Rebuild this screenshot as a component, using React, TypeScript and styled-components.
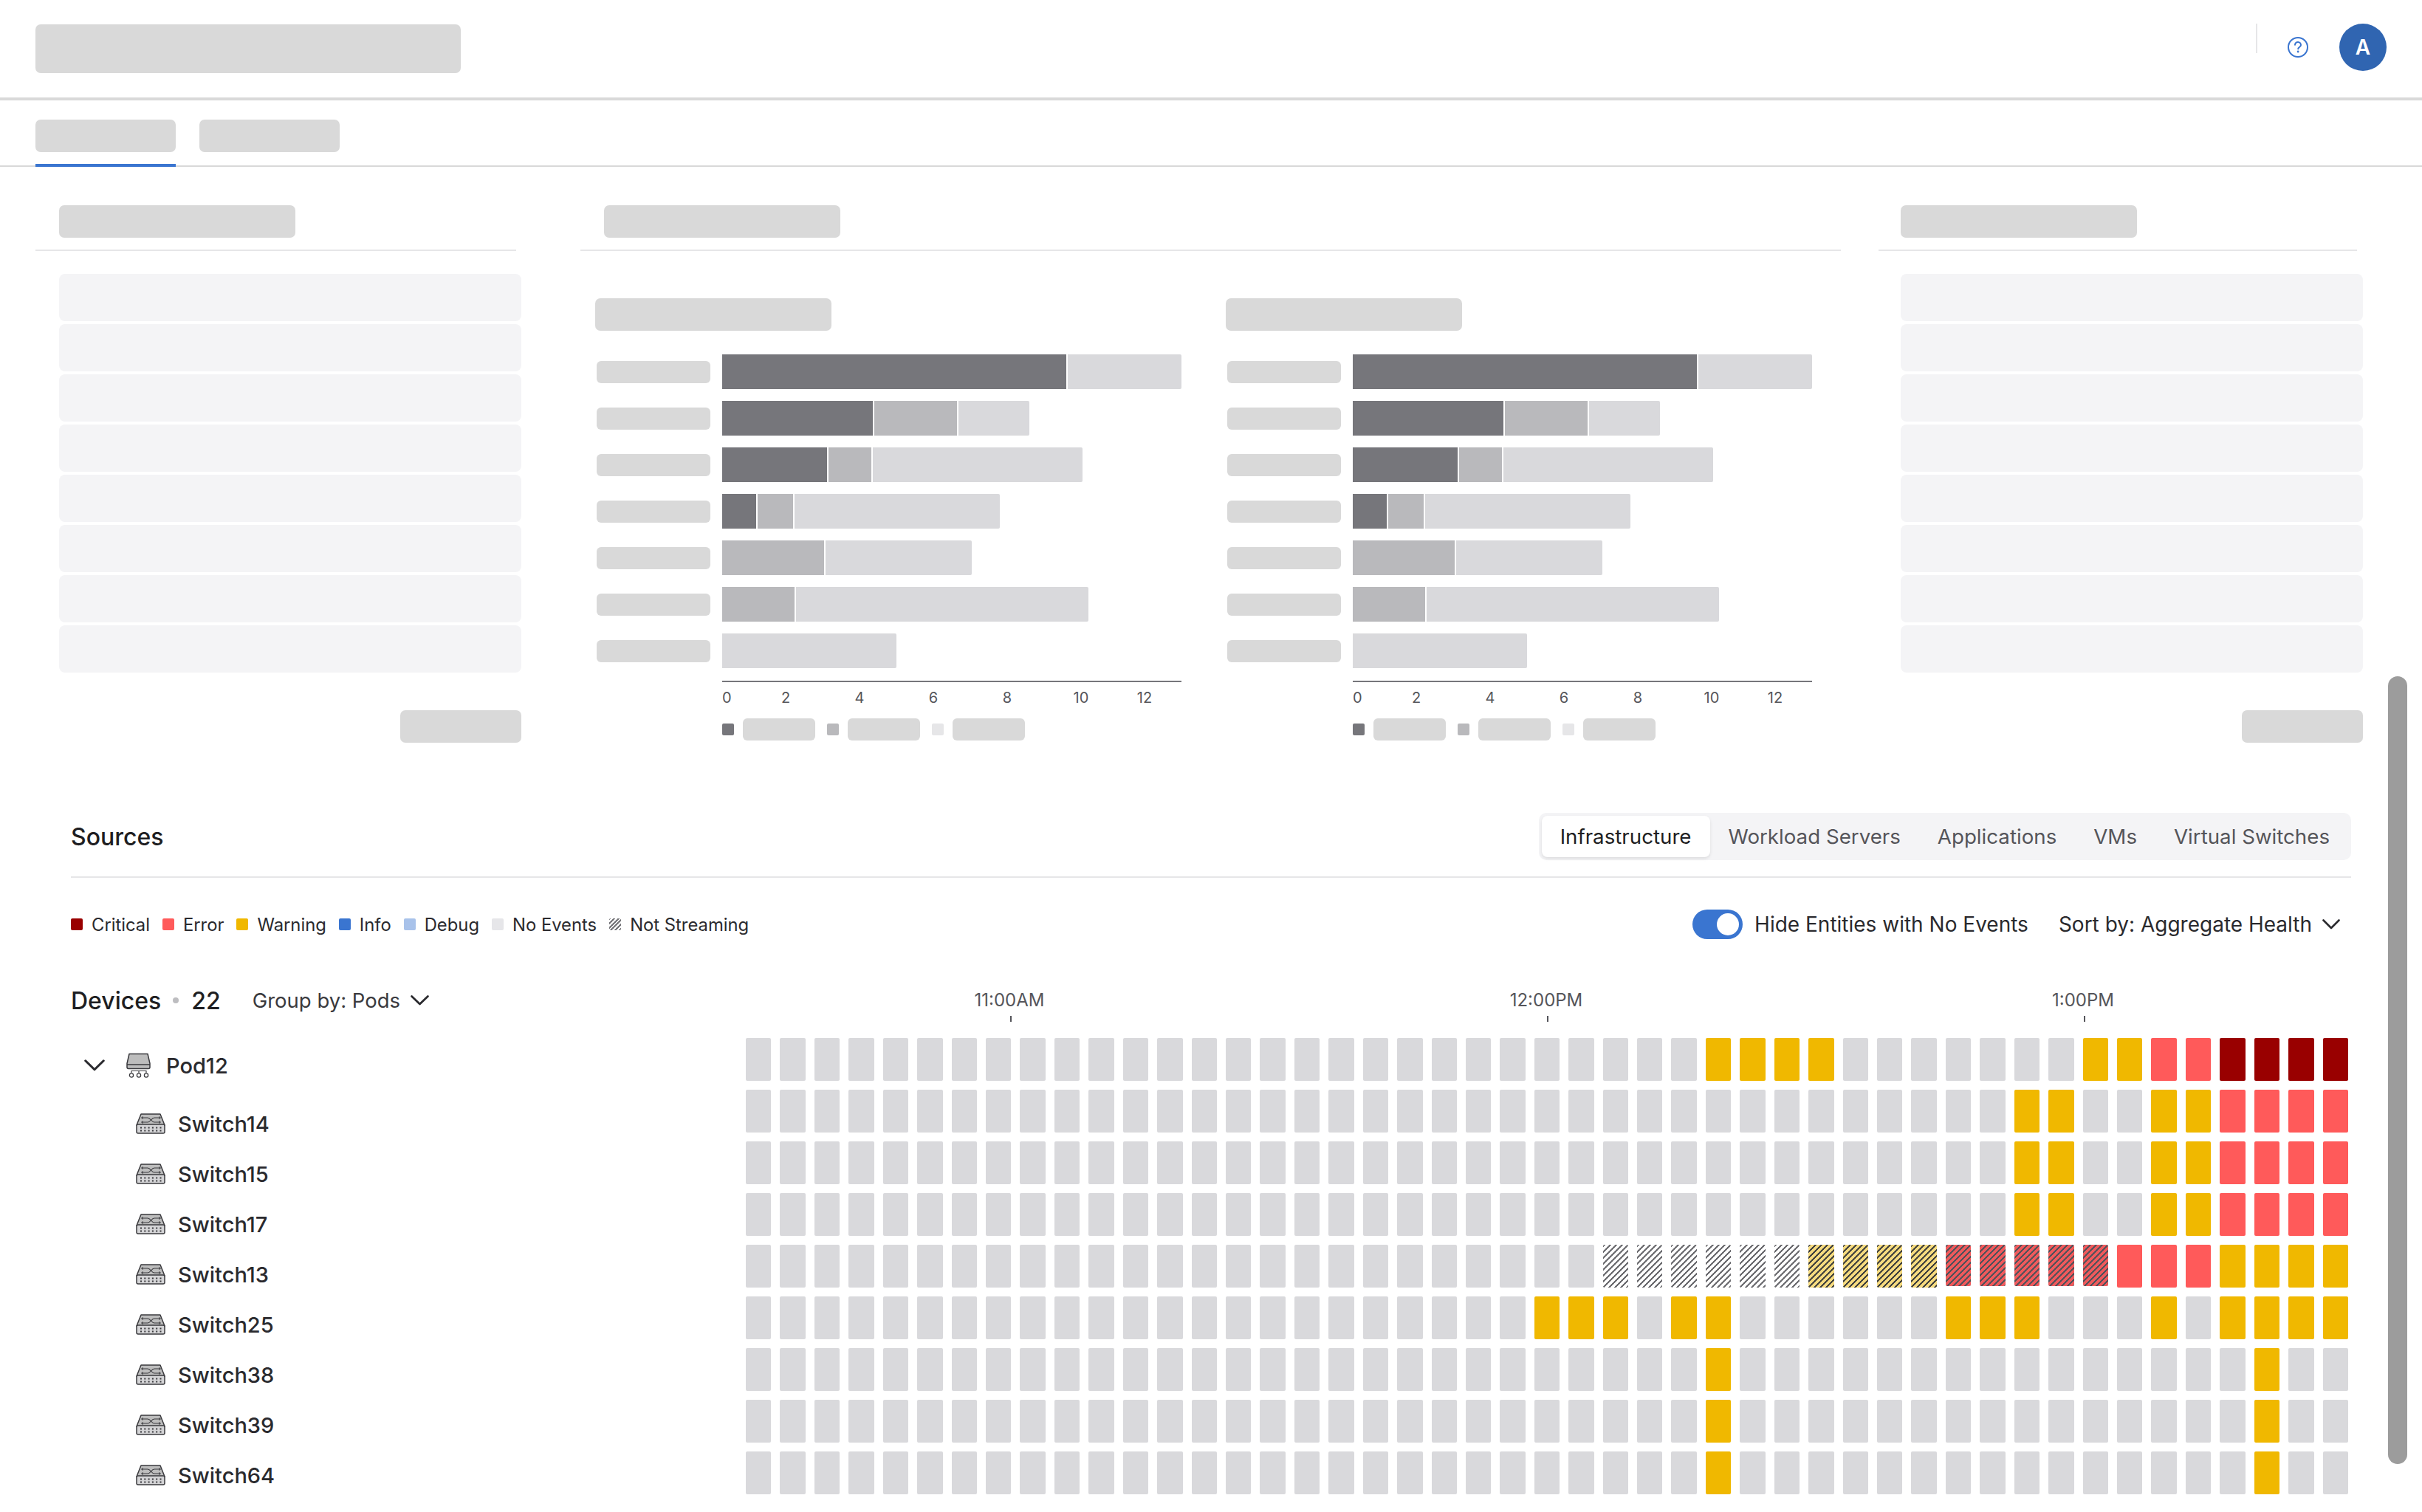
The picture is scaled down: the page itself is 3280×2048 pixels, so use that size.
import React from 'react';
import styled, { createGlobalStyle } from 'styled-components';

const GlobalStyle = createGlobalStyle`
    html, body { margin: 0; padding: 0; background: #fff; }
    body { font-family: Inter, "Liberation Sans", sans-serif; color: #2a2a2e; }
    * { box-sizing: border-box; }
`;

const Page = styled.div`
    position: relative;
    width: 3280px;
    height: 2048px;
    overflow: hidden;
    background: #fff;
`;

const Skeleton = styled.div<{ $w: number; $h: number; $r?: number }>`
    width: ${p => p.$w}px;
    height: ${p => p.$h}px;
    border-radius: ${p => p.$r ?? 7}px;
    background: #d9d9d9;
    flex: none;
`;

/* top bar */
const Header = styled.header`
    display: flex;
    justify-content: space-between;
    height: 136px;
    padding: 33px 48px 0;
    border-bottom: 4px solid #d9d9d9;
`;
const HeaderRight = styled.div`
    display: flex;
    align-items: center;
    height: 64px;
    margin-top: -1px;
`;
const HeaderRule = styled.div`
    width: 2px;
    height: 40px;
    background: #e6e6e8;
    align-self: flex-start;
`;
const HelpIcon = styled.svg`
    width: 30px;
    height: 30px;
    margin: 0 41px 0 40px;
`;
const Avatar = styled.div`
    width: 64px;
    height: 64px;
    border-radius: 50%;
    background: #3065b1;
    color: #fff;
    font-size: 28px;
    font-weight: 600;
    display: flex;
    align-items: center;
    justify-content: center;
`;

/* page tabs */
const TabBar = styled.nav`
    display: flex;
    gap: 32px;
    height: 90px;
    padding: 0 48px;
    border-bottom: 2px solid #d9d9d9;
`;
const PageTab = styled.div<{ $active?: boolean }>`
    height: 90px;
    padding-top: 26px;
    border-bottom: 4px solid ${p => (p.$active ? '#3a75d0' : 'transparent')};
`;

/* panels */
const Panels = styled.section`
    display: flex;
    align-items: flex-start;
    padding: 52px 0 0 48px;
    height: 876px;
`;
const SidePanel = styled.div<{ $w: number; $gap: number }>`
    width: ${p => p.$w}px;
    margin-right: ${p => p.$gap}px;
    flex: none;
    display: flex;
    flex-direction: column;
`;
const PanelHead = styled.div<{ $rule: number; $pad: number }>`
    width: ${p => p.$rule}px;
    padding: 0 0 16px ${p => p.$pad}px;
    border-bottom: 2px solid #e6e6e8;
`;
const SkeletonList = styled.div<{ $pad: number }>`
    display: flex;
    flex-direction: column;
    gap: 4px;
    margin-top: 31px;
    padding-left: ${p => p.$pad}px;
`;
const SkeletonRow = styled.div`
    height: 64px;
    border-radius: 8px;
    background: #f4f4f6;
`;
const PanelAction = styled.div`
    align-self: flex-end;
    margin-top: 51px;
`;
const CenterPanel = styled.div`
    width: 1707px;
    margin-right: 51px;
    flex: none;
`;
const Charts = styled.div`
    display: flex;
    gap: 60px;
    padding: 64px 0 0 20px;
`;
const Chart = styled.div`
    width: 794px;
`;
const BarRows = styled.div`
    display: flex;
    flex-direction: column;
    gap: 16px;
    margin-top: 32px;
`;
const BarRow = styled.div`
    display: flex;
    align-items: center;
    padding-left: 2px;
`;
const BarTrack = styled.div`
    display: flex;
    gap: 2px;
    margin-left: 16px;
    height: 47px;
`;
const Seg = styled.div<{ $tone: number }>`
    height: 100%;
    background: ${p => ['#76767b', '#b9b9bc', '#d9d9dc'][p.$tone]};
    &:last-child { border-radius: 0 2px 2px 0; }
`;
const AxisLine = styled.div`
    width: 622px;
    height: 2px;
    margin: 17px 0 0 172px;
    background: #76767b;
`;
const Ticks = styled.div`
    display: flex;
    margin: 9px 0 0 172px;
    font-size: 20px;
    line-height: 24px;
    color: #55555a;
`;
const Tick = styled.span<{ $w: number; $left?: boolean }>`
    width: ${p => p.$w}px;
    text-align: ${p => (p.$left ? 'left' : 'center')};
`;
const ChartLegend = styled.div`
    display: flex;
    align-items: center;
    margin: 16px 0 0 172px;
`;
const LegendSwatch = styled.span<{ $c: string }>`
    width: 16px;
    height: 16px;
    border-radius: 2px;
    margin-right: 12px;
    background: ${p => p.$c};
    flex: none;
`;
const ChartLegendItem = styled.div`
    display: flex;
    align-items: center;
    margin-right: 16px;
`;

/* sources */
const Sources = styled.section`
    padding: 0 96px;
`;
const SourcesHead = styled.div`
    display: flex;
    align-items: center;
    justify-content: space-between;
    height: 87px;
    padding-bottom: 23px;
    border-bottom: 2px solid #e6e6e8;
`;
const SectionTitle = styled.h2`
    margin: 0;
    font-size: 32px;
    font-weight: 500;
    color: #1e1e22;
`;
const Segmented = styled.div`
    display: flex;
    padding: 4px;
    height: 64px;
    border-radius: 10px;
    background: #f4f4f6;
`;
const SegItem = styled.div<{ $active?: boolean }>`
    display: flex;
    align-items: center;
    padding: 0 25px;
    font-size: 27.7px;
    border-radius: 8px;
    color: ${p => (p.$active ? '#1e1e22' : '#55555a')};
    background: ${p => (p.$active ? '#fff' : 'transparent')};
    box-shadow: ${p => (p.$active ? '0 2px 4px rgba(0,0,0,.1)' : 'none')};
`;
const FilterRow = styled.div`
    display: flex;
    align-items: center;
    justify-content: space-between;
    height: 40px;
    margin-top: 43px;
    padding-right: 15px;
`;
const Legend = styled.div`
    display: flex;
    align-items: center;
    gap: 17px;
    font-size: 23.8px;
    color: #2a2a2e;
`;
const LegendItem = styled.div`
    display: flex;
    align-items: center;
`;
const StreamSwatch = styled(LegendSwatch)`
    background: repeating-linear-gradient(135deg, #77777b 0 2px, #fff 2px 4px);
`;
const Controls = styled.div`
    display: flex;
    align-items: center;
    font-size: 28px;
    color: #2a2a2e;
`;
const Toggle = styled.div`
    position: relative;
    width: 68px;
    height: 40px;
    border-radius: 20px;
    background: #3a75d0;
    margin-right: 16px;
`;
const Knob = styled.span`
    position: absolute;
    right: 5px;
    top: 5px;
    width: 30px;
    height: 30px;
    border-radius: 50%;
    background: #fff;
`;
const SortLabel = styled.span`
    margin-left: 41px;
`;
const Chevron = styled.svg<{ $w: number }>`
    width: ${p => p.$w}px;
    height: ${p => Math.round(p.$w * 0.58)}px;
    flex: none;
`;
const SortChevron = styled(Chevron)`
    margin-left: 14px;
`;

const Body = styled.div`
    display: flex;
    margin-top: 60px;
`;
const TreeColumn = styled.div`
    width: 914px;
    flex: none;
`;
const DevicesRow = styled.div`
    display: flex;
    align-items: center;
    height: 50px;
    margin-top: -2px;
`;
const DevicesTitle = styled.span`
    font-size: 32px;
    font-weight: 500;
    color: #1e1e22;
`;
const Dot = styled.span`
    width: 8px;
    height: 8px;
    border-radius: 50%;
    background: #bdbdc0;
    margin: 0 17px 0 16px;
`;
const GroupBy = styled.span`
    margin-left: 43px;
    margin-right: 14px;
    font-size: 27.5px;
    color: #3a3a3e;
`;
const PodRow = styled.div`
    display: flex;
    align-items: center;
    height: 68px;
    margin-top: 29px;
    padding-left: 18px;
    font-size: 29px;
    font-weight: 500;
`;
const PodIconBox = styled.svg`
    width: 33px;
    height: 34px;
    margin: 0 21px 0 29px;
`;
const SwitchList = styled.div`
    margin-top: 11px;
`;
const SwitchRow = styled.div`
    display: flex;
    align-items: center;
    height: 68px;
    padding-left: 88px;
    font-size: 29px;
    font-weight: 500;
`;
const SwitchIconBox = styled.svg`
    width: 40px;
    height: 28px;
    margin-right: 17px;
`;

const HeatColumn = styled.div`
    width: 2170px;
    flex: none;
`;
const TimeAxis = styled.div`
    display: flex;
    height: 74px;
    margin-left: -4.5px;
    padding-top: 8px;
`;
const TimeMark = styled.div`
    width: 727px;
    flex: none;
    display: flex;
    flex-direction: column;
    align-items: center;
    font-size: 24px;
    line-height: 30px;
    color: #55555a;
`;
const TimeLabel = styled.span`
    padding-right: 4px;
`;
const TimeTick = styled.span`
    width: 2px;
    height: 8px;
    margin-top: 6px;
    background: #55555a;
`;
const Heat = styled.div`
    display: grid;
    grid-template-columns: repeat(47, 1fr);
    grid-auto-rows: 58px;
    gap: 12px;
`;

const hatch = (bg: string, fg: string) =>
    `repeating-linear-gradient(135deg, ${fg} 0 2.3px, ${bg} 2.3px 5.66px)`;

const cellFill: Record<string, string> = {
    '.': '#d9d9dc',
    y: '#f0b800',
    e: '#ff5a5a',
    c: '#990000',
    h: hatch('#fff', '#6e6e72'),
    w: hatch('#f7db7f', '#45453f'),
    r: hatch('#f05a5c', '#55525a'),
};

const Cell = styled.div<{ $k: string }>`
    border-radius: 2px;
    background: ${p => cellFill[p.$k]};
    ${p => (p.$k === 'r' ? 'height: 56px;' : '')}
`;

const Thumb = styled.div`
    position: absolute;
    left: 3234px;
    top: 916px;
    width: 26px;
    height: 1067px;
    border-radius: 13px;
    background: #9c9c9c;
`;

const dots = (n: number) => '.'.repeat(n);
const upper = dots(37) + 'yy..yyeeee';
const lower = dots(28) + 'y' + dots(15) + 'y..';
const heatRows = [
    dots(28) + 'yyyy' + dots(7) + 'yyeecccc',
    upper,
    upper,
    upper,
    dots(25) + 'hhhhhhwwwwrrrrreeeyyyy',
    dots(23) + 'yyy.yy' + dots(6) + 'yyy...y.yyyy',
    lower,
    lower,
    lower,
];

const barData: { tone: number; w: number }[][] = [
    [{ tone: 0, w: 466 }, { tone: 2, w: 154 }],
    [{ tone: 0, w: 204 }, { tone: 1, w: 112 }, { tone: 2, w: 96 }],
    [{ tone: 0, w: 142 }, { tone: 1, w: 58 }, { tone: 2, w: 284 }],
    [{ tone: 0, w: 46 }, { tone: 1, w: 48 }, { tone: 2, w: 278 }],
    [{ tone: 1, w: 138 }, { tone: 2, w: 198 }],
    [{ tone: 1, w: 98 }, { tone: 2, w: 396 }],
    [{ tone: 2, w: 236 }],
];

const ChevronDown = ({ w = 24, as: Comp = Chevron }: { w?: number; as?: typeof Chevron }) => (
    <Comp $w={w} viewBox="0 0 24 14" preserveAspectRatio="none" fill="none">
        <path d="M1.5 1.5 12 12 22.5 1.5" stroke="#2a2a2e" strokeWidth="2.6" strokeLinecap="round" strokeLinejoin="round" />
    </Comp>
);

const PodIcon = () => (
    <PodIconBox viewBox="0 0 33 34" fill="none">
        <path d="M4 1.5h25l3 13v5a2 2 0 0 1-2 2H3a2 2 0 0 1-2-2v-5z" fill="#bdbdbd" stroke="#3a3a3e" strokeWidth="1.5" strokeLinejoin="round" />
        <path d="M1 16h31" stroke="#3a3a3e" strokeWidth="1.5" />
        <path d="M7 27v-2.5h20V27M17 24.5V27" stroke="#3a3a3e" strokeWidth="1.2" />
        <circle cx="7" cy="30.5" r="2.6" fill="#fff" stroke="#3a3a3e" strokeWidth="1.3" />
        <circle cx="17" cy="30.5" r="2.6" fill="#fff" stroke="#3a3a3e" strokeWidth="1.3" />
        <circle cx="27" cy="30.5" r="2.6" fill="#fff" stroke="#3a3a3e" strokeWidth="1.3" />
    </PodIconBox>
);

const SwitchIcon = () => (
    <SwitchIconBox viewBox="0 0 40 28" fill="none">
        <path d="M7 1h26l6 15H1z" fill="#bdbdbd" stroke="#3a3a3e" strokeWidth="1.5" strokeLinejoin="round" />
        <rect x="1" y="15" width="38" height="12" rx="2" fill="#d4d4d6" stroke="#3a3a3e" strokeWidth="1.5" />
        <path d="M8 6h8c4 0 5 6 9 6h8M8 12h8c4 0 5-6 9-6h8" stroke="#3a3a3e" strokeWidth="1.1" />
        <path d="M10 4.5 7.5 6 10 7.5M10 10.5 7.5 12 10 13.5M31 4.5 33.5 6 31 7.5M31 10.5 33.5 12 31 13.5" stroke="#3a3a3e" strokeWidth="1" />
        {[6, 11.3, 16.6, 21.9, 27.2, 32.5].map(x => (
            <React.Fragment key={x}>
                <rect x={x} y="18.5" width="2" height="2" fill="#3a3a3e" />
                <rect x={x} y="22.5" width="2" height="2" fill="#3a3a3e" />
            </React.Fragment>
        ))}
    </SwitchIconBox>
);

const BarChart = () => (
    <Chart>
        <Skeleton $w={320} $h={44} />
        <BarRows>
            {barData.map((segs, i) => (
                <BarRow key={i}>
                    <Skeleton $w={154} $h={30} $r={6} />
                    <BarTrack>
                        {segs.map((s, j) => (
                            <Seg key={j} $tone={s.tone} style={{ width: s.w }} />
                        ))}
                    </BarTrack>
                </BarRow>
            ))}
        </BarRows>
        <AxisLine />
        <Ticks>
            <Tick $w={36} $left>0</Tick>
            <Tick $w={100}>2</Tick>
            <Tick $w={100}>4</Tick>
            <Tick $w={100}>6</Tick>
            <Tick $w={100}>8</Tick>
            <Tick $w={100}>10</Tick>
            <Tick $w={72}>12</Tick>
        </Ticks>
        <ChartLegend>
            <ChartLegendItem>
                <LegendSwatch $c="#76767b" />
                <Skeleton $w={98} $h={30} $r={6} />
            </ChartLegendItem>
            <ChartLegendItem>
                <LegendSwatch $c="#b9b9bc" />
                <Skeleton $w={98} $h={30} $r={6} />
            </ChartLegendItem>
            <ChartLegendItem>
                <LegendSwatch $c="#e6e6e8" />
                <Skeleton $w={98} $h={30} $r={6} />
            </ChartLegendItem>
        </ChartLegend>
    </Chart>
);

const legendItems = [
    ['Critical', '#990000'],
    ['Error', '#ff5a5a'],
    ['Warning', '#f0b800'],
    ['Info', '#3a75d0'],
    ['Debug', '#a8c2ea'],
    ['No Events', '#e6e6e9'],
];

const switches = ['Switch14', 'Switch15', 'Switch17', 'Switch13', 'Switch25', 'Switch38', 'Switch39', 'Switch64'];

const App = () => (
    <Page>
        <GlobalStyle />
        <Header>
            <Skeleton $w={576} $h={66} />
            <HeaderRight>
                <HeaderRule />
                <HelpIcon viewBox="0 0 30 30" fill="none">
                    <circle cx="15" cy="15" r="13" stroke="#3a75d0" strokeWidth="2" />
                    <path d="M11 11.8a4 4 0 0 1 8 .2c0 2.5-3.6 2.8-3.8 5.2" stroke="#3a75d0" strokeWidth="2" strokeLinecap="round" />
                    <circle cx="15.1" cy="21" r="1.4" fill="#3a75d0" />
                </HelpIcon>
                <Avatar>A</Avatar>
            </HeaderRight>
        </Header>
        <TabBar>
            <PageTab $active><Skeleton $w={190} $h={44} /></PageTab>
            <PageTab><Skeleton $w={190} $h={44} /></PageTab>
        </TabBar>
        <Panels>
            <SidePanel $w={658} $gap={80}>
                <PanelHead $rule={651} $pad={32}><Skeleton $w={320} $h={44} /></PanelHead>
                <SkeletonList $pad={32}>
                    {Array.from({ length: 8 }, (_, i) => <SkeletonRow key={i} />)}
                </SkeletonList>
                <PanelAction><Skeleton $w={164} $h={44} /></PanelAction>
            </SidePanel>
            <CenterPanel>
                <PanelHead $rule={1707} $pad={32}><Skeleton $w={320} $h={44} /></PanelHead>
                <Charts>
                    <BarChart />
                    <BarChart />
                </Charts>
            </CenterPanel>
            <SidePanel $w={656} $gap={0}>
                <PanelHead $rule={648} $pad={30}><Skeleton $w={320} $h={44} /></PanelHead>
                <SkeletonList $pad={30}>
                    {Array.from({ length: 8 }, (_, i) => <SkeletonRow key={i} />)}
                </SkeletonList>
                <PanelAction><Skeleton $w={164} $h={44} /></PanelAction>
            </SidePanel>
        </Panels>
        <Sources>
            <SourcesHead>
                <SectionTitle>Sources</SectionTitle>
                <Segmented>
                    <SegItem $active>Infrastructure</SegItem>
                    <SegItem>Workload Servers</SegItem>
                    <SegItem>Applications</SegItem>
                    <SegItem>VMs</SegItem>
                    <SegItem>Virtual Switches</SegItem>
                </Segmented>
            </SourcesHead>
            <FilterRow>
                <Legend>
                    {legendItems.map(([label, color]) => (
                        <LegendItem key={label}>
                            <LegendSwatch $c={color} />
                            {label}
                        </LegendItem>
                    ))}
                    <LegendItem>
                        <StreamSwatch $c="none" />
                        Not Streaming
                    </LegendItem>
                </Legend>
                <Controls>
                    <Toggle><Knob /></Toggle>
                    Hide Entities with No Events
                    <SortLabel>Sort by: Aggregate Health</SortLabel>
                    <ChevronDown w={24} as={SortChevron} />
                </Controls>
            </FilterRow>
            <Body>
                <TreeColumn>
                    <DevicesRow>
                        <DevicesTitle>Devices</DevicesTitle>
                        <Dot />
                        <DevicesTitle>22</DevicesTitle>
                        <GroupBy>Group by: Pods</GroupBy>
                        <ChevronDown w={25} />
                    </DevicesRow>
                    <PodRow>
                        <ChevronDown w={28} />
                        <PodIcon />
                        Pod12
                    </PodRow>
                    <SwitchList>
                        {switches.map(name => (
                            <SwitchRow key={name}>
                                <SwitchIcon />
                                {name}
                            </SwitchRow>
                        ))}
                    </SwitchList>
                </TreeColumn>
                <HeatColumn>
                    <TimeAxis>
                        {['11:00AM', '12:00PM', '1:00PM'].map(t => (
                            <TimeMark key={t}>
                                <TimeLabel>{t}</TimeLabel>
                                <TimeTick />
                            </TimeMark>
                        ))}
                    </TimeAxis>
                    <Heat>
                        {heatRows.flatMap((row, r) =>
                            row.split('').map((k, c) => <Cell key={`${r}-${c}`} $k={k} />)
                        )}
                    </Heat>
                </HeatColumn>
            </Body>
        </Sources>
        <Thumb />
    </Page>
);

export default App;
